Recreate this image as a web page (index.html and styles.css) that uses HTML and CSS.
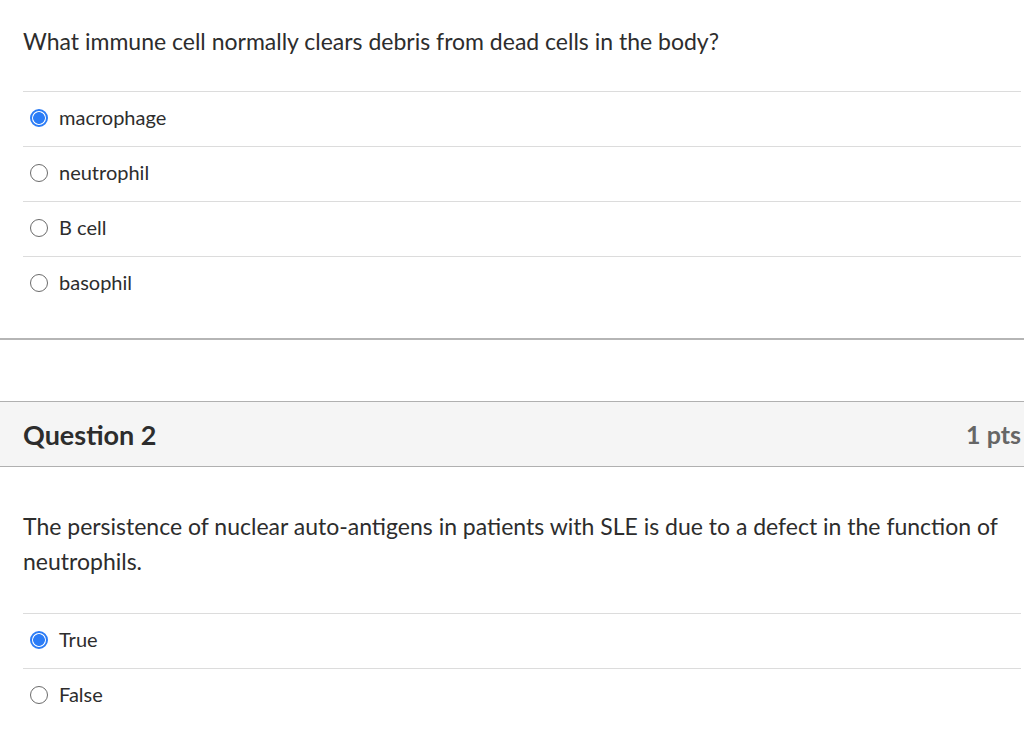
FILE: index.html
```html
<!DOCTYPE html>
<html>
<head>
<meta charset="utf-8">
<link rel="stylesheet" href="styles.css">
</head>
<body>
<div class="quiz">
  <section class="question q1">
    <div class="q-text">What immune cell normally clears debris from dead cells in the body?</div>
    <div class="answers">
      <label class="answer"><span class="radio checked"></span><span class="a-text">macrophage</span></label>
      <label class="answer"><span class="radio"></span><span class="a-text">neutrophil</span></label>
      <label class="answer"><span class="radio"></span><span class="a-text">B cell</span></label>
      <label class="answer"><span class="radio"></span><span class="a-text">basophil</span></label>
    </div>
  </section>
  <div class="divider"></div>
  <section class="question q2">
    <header class="q-header">
      <h2 class="q-title">Question 2</h2>
      <span class="q-pts">1 pts</span>
    </header>
    <div class="q-text">The persistence of nuclear auto-antigens in patients with SLE is due to a defect in the function of neutrophils.</div>
    <div class="answers">
      <label class="answer"><span class="radio checked"></span><span class="a-text">True</span></label>
      <label class="answer"><span class="radio"></span><span class="a-text">False</span></label>
    </div>
  </section>
</div>
</body>
</html>
```
FILE: styles.css
```css
html, body {
  margin: 0;
  padding: 0;
  background: #fff;
}
body {
  font-family: Lato, "Open Sans", sans-serif;
  color: #2d2d2d;
}
.quiz {
  display: flex;
  flex-direction: column;
}
.q-text {
  font-size: 23px;
  line-height: 35px;
  padding: 0 23px;
}
.q1 .q-text {
  padding-top: 24px;
  padding-bottom: 32px;
}
.answers {
  margin: 0 3px 0 23px;
  display: flex;
  flex-direction: column;
}
.answer {
  display: flex;
  align-items: center;
  height: 54px;
  border-top: 1px solid #dcdcdc;
  font-size: 20px;
}
.radio {
  box-sizing: border-box;
  width: 18px;
  height: 18px;
  border-radius: 50%;
  border: 1.5px solid #6b6b6b;
  margin-left: 7px;
  margin-right: 11px;
  flex: none;
  background: #fff;
  position: relative;
  top: -1px;
}
.radio.checked {
  border: 2px solid #2b7cf6;
  background: radial-gradient(circle, #2b7cf6 0 5.5px, #fff 6.2px);
}
.a-text {
  position: relative;
  top: -2px;
}
.q1 .answers {
  padding-bottom: 27px;
}
.divider {
  height: 0;
  border-top: 2px solid #b5b5b5;
}
.q2 {
  padding-top: 61px;
}
.q-header {
  display: flex;
  justify-content: space-between;
  align-items: center;
  height: 64px;
  background: #f5f5f5;
  border-top: 1px solid #b0b0b0;
  border-bottom: 1px solid #b0b0b0;
  padding: 0 3px 0 23px;
}
.q-title {
  margin: 0;
  font-size: 27px;
  font-weight: 700;
  color: #2d2d2d;
}
.q-pts {
  font-size: 25px;
  font-weight: 700;
  color: #666;
}
.q2 .q-text {
  padding-top: 42px;
  padding-bottom: 34px;
}
```
